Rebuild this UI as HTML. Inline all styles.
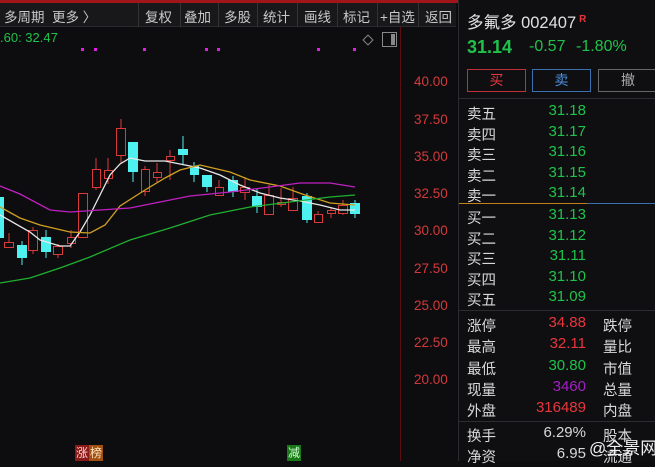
<!DOCTYPE html>
<html><head><meta charset="utf-8"><style>
*{margin:0;padding:0;box-sizing:border-box}
body{width:655px;height:461px;background:#0d0d10;overflow:hidden;position:relative;font-family:"Liberation Sans","Noto Sans CJK SC",sans-serif;color:#d0d0d0}
.a{position:absolute;white-space:nowrap}
.tb{position:absolute;left:0;top:3px;width:456px;height:24px;background:#18181b;border-bottom:1px solid #2a2a2e}
.tb span{position:absolute;top:3px;font-size:13.5px;color:#c8c8c8}
.sep{position:absolute;top:0;width:1px;height:24px;background:#333}
.rp{position:absolute;left:458px;top:0;width:197px;height:461px;background:#0f0f12;border-left:1px solid #2c2c30}
.l{position:absolute;left:8px;font-size:14.5px;color:#d8d8d8}
.v{position:absolute;right:69px;font-size:15px;text-align:right}
.l3{position:absolute;left:144px;font-size:14.5px;color:#d8d8d8}
.g{color:#1fc24a}.r{color:#e8363d}
</style></head><body>
<div class="a" style="left:0;top:0;width:655px;height:3px;background:#a0141a"></div>
<div class="tb">
<span style="left:4px">多周期&nbsp; 更多 〉</span>
<div class="sep" style="left:138px"></div><span style="left:145px">复权</span>
<div class="sep" style="left:180px"></div><span style="left:184px">叠加</span>
<div class="sep" style="left:218px"></div><span style="left:224px">多股</span>
<div class="sep" style="left:257px"></div><span style="left:263px">统计</span>
<div class="sep" style="left:297px"></div><span style="left:304px">画线</span>
<div class="sep" style="left:337px"></div><span style="left:343px">标记</span>
<div class="sep" style="left:377px"></div><span style="left:380px">+自选</span>
<div class="sep" style="left:418px"></div><span style="left:425px">返回</span>
</div>
<div class="a g" style="left:0;top:30px;font-size:13px">.60: 32.47</div>
<div class="a" style="left:400px;top:27px;width:1px;height:434px;background:#5a0d10"></div>
<div class="a" style="left:364px;top:36px;width:8px;height:8px;border:1px solid #888;transform:rotate(45deg)"></div>
<div class="a" style="left:382px;top:32px;width:15px;height:15px;border:1px solid #888"><div style="position:absolute;right:1px;top:1px;width:4px;height:11px;background:#888"></div></div>
<div class="a" style="left:414px;top:74px;font-size:13.5px;color:#d23a3a">40.00</div>
<div class="a" style="left:414px;top:112px;font-size:13.5px;color:#d23a3a">37.50</div>
<div class="a" style="left:414px;top:149px;font-size:13.5px;color:#d23a3a">35.00</div>
<div class="a" style="left:414px;top:186px;font-size:13.5px;color:#d23a3a">32.50</div>
<div class="a" style="left:414px;top:223px;font-size:13.5px;color:#d23a3a">30.00</div>
<div class="a" style="left:414px;top:261px;font-size:13.5px;color:#d23a3a">27.50</div>
<div class="a" style="left:414px;top:298px;font-size:13.5px;color:#d23a3a">25.00</div>
<div class="a" style="left:414px;top:335px;font-size:13.5px;color:#d23a3a">22.50</div>
<div class="a" style="left:414px;top:372px;font-size:13.5px;color:#d23a3a">20.00</div>
<svg class="a" style="left:0;top:0" width="400" height="461">
<g fill="#e020e0"><rect x="81" y="48" width="3" height="3"/><rect x="94" y="48" width="3" height="3"/><rect x="143" y="48" width="3" height="3"/><rect x="205" y="48" width="3" height="3"/><rect x="217" y="48" width="3" height="3"/><rect x="317" y="48" width="3" height="3"/><rect x="353" y="48" width="3" height="3"/></g>
<g stroke="#d93a3a" stroke-width="1" fill="none">
<path d="M9 233V248M22 241V265M33 227V254M58 244V258M71 230V248M83 193V237M96 158V190M108 158V184M121 119V163M145 166V196M157 163V182M170 150V180M219 180V195M245 177V200M269 185V214M281 188V207M293 187V210M318 211V223M331 207V218M343 200V215"/>
<rect x="4.5" y="242.5" width="9" height="5" fill="#0d0d10"/>
<rect x="28.5" y="230.5" width="9" height="20" fill="#0d0d10"/>
<rect x="53.5" y="246.5" width="9" height="8" fill="#0d0d10"/>
<rect x="67.5" y="237.5" width="8" height="6" fill="#0d0d10"/>
<rect x="78.5" y="193.5" width="9" height="44" fill="#0d0d10"/>
<rect x="92.5" y="169.5" width="8" height="18" fill="#0d0d10"/>
<rect x="104.5" y="170.5" width="8" height="8" fill="#0d0d10"/>
<rect x="116.5" y="128.5" width="9" height="27" fill="#0d0d10"/>
<rect x="141.5" y="169.5" width="8" height="22" fill="#0d0d10"/>
<rect x="153.5" y="172.5" width="8" height="5" fill="#0d0d10"/>
<rect x="166.5" y="156.5" width="8" height="4" fill="#0d0d10"/>
<rect x="215.5" y="187.5" width="8" height="8" fill="#0d0d10"/>
<rect x="240.5" y="187.5" width="9" height="5" fill="#0d0d10"/>
<rect x="264.5" y="195.5" width="9" height="19" fill="#0d0d10"/>
<rect x="277.5" y="202.5" width="8" height="2" fill="#0d0d10"/>
<rect x="288.5" y="198.5" width="9" height="12" fill="#0d0d10"/>
<rect x="314.5" y="214.5" width="8" height="8" fill="#0d0d10"/>
<rect x="327.5" y="210.5" width="8" height="3" fill="#0d0d10"/>
<rect x="338.5" y="205.5" width="9" height="8" fill="#0d0d10"/>
</g>
<g fill="#4ff0f0" stroke="#4ff0f0">
<path d="M22 241V265M46 230V258M133 142V182M183 136V165M194 162V182M207 178V192M233 176V197M257 188V213M307 193V223M355 200V218" stroke-width="1"/>
<rect x="0" y="197" width="4" height="41" stroke="none"/>
<rect x="17" y="245" width="10" height="13" stroke="none"/>
<rect x="41" y="237" width="10" height="15" stroke="none"/>
<rect x="128" y="142" width="10" height="30" stroke="none"/>
<rect x="178" y="149" width="10" height="6" stroke="none"/>
<rect x="190" y="166" width="9" height="9" stroke="none"/>
<rect x="202" y="175" width="10" height="12" stroke="none"/>
<rect x="228" y="180" width="10" height="12" stroke="none"/>
<rect x="252" y="196" width="10" height="11" stroke="none"/>
<rect x="302" y="196" width="10" height="24" stroke="none"/>
<rect x="350" y="203" width="10" height="11" stroke="none"/>
</g>
<g fill="none" stroke-width="1.3">
<polyline stroke="#e8e8e8" points="0,215 30,232 40,240 60,246 70,246 80,232 90,215 100,195 110,175 120,164 130,158 145,161 165,161 180,164 200,168 220,175 240,185 260,193 280,198 300,201 320,205 340,210 355,210"/>
<polyline stroke="#d0a020" points="0,207 20,218 40,225 70,232 90,233 105,225 120,206 145,190 165,178 180,170 200,165 230,172 250,180 280,186 305,195 330,203 355,205"/>
<polyline stroke="#c020c0" points="0,186 20,194 50,210 70,212 100,210 130,208 160,202 190,196 230,192 270,187 300,183 330,183 355,187"/>
<polyline stroke="#20b030" points="0,283 30,278 60,268 90,257 130,240 170,228 210,215 250,207 290,202 330,197 355,195"/>
</g>
</svg>
<div class="a" style="left:75px;top:445px;width:14px;height:16px;background:#8a1a1a;color:#ffd0d0;font-size:12px;line-height:16px;text-align:center">涨</div>
<div class="a" style="left:89px;top:445px;width:14px;height:16px;background:#a05010;color:#ffe0c0;font-size:12px;line-height:16px;text-align:center">榜</div>
<div class="a" style="left:287px;top:445px;width:14px;height:16px;background:#1a7a1a;color:#d0ffd0;font-size:12px;line-height:16px;text-align:center">减</div>

<div class="rp">
<div class="a" style="left:8px;top:9px;font-size:16.5px;color:#e0e0e0">多氟多 002407<sup style="color:#e8363d;font-size:10px;font-weight:bold;margin-left:3px">R</sup></div>
<div class="a g" style="left:8px;top:37px;font-size:18px;font-weight:bold">31.14</div>
<div class="a g" style="left:70px;top:38px;font-size:16px">-0.57</div>
<div class="a g" style="left:117px;top:38px;font-size:16px">-1.80%</div>
<div class="a" style="left:8px;top:69px;width:59px;height:23px;border:1px solid #c0303a;color:#e8363d;text-align:center;font-size:14px;line-height:21px">买</div>
<div class="a" style="left:73px;top:69px;width:59px;height:23px;border:1px solid #3a6fb0;color:#4a90e0;text-align:center;font-size:14px;line-height:21px">卖</div>
<div class="a" style="left:139px;top:69px;width:60px;height:23px;border:1px solid #666;color:#aaa;text-align:center;font-size:14px;line-height:21px">撤</div>
<div class="a" style="left:0;top:98px;width:197px;height:1px;background:#2c2c30"></div>
<div class="l" style="top:103px">卖五</div><div class="v g" style="top:102px">31.18</div>
<div class="l" style="top:124px">卖四</div><div class="v g" style="top:123px">31.17</div>
<div class="l" style="top:144px">卖三</div><div class="v g" style="top:143px">31.16</div>
<div class="l" style="top:165px">卖二</div><div class="v g" style="top:164px">31.15</div>
<div class="l" style="top:185px">卖一</div><div class="v g" style="top:184px">31.14</div>
<div class="a" style="left:0;top:203px;width:128px;height:1px;background:#c08020"></div>
<div class="a" style="left:128px;top:203px;width:69px;height:1px;background:#3a6fb0"></div>
<div class="l" style="top:207px">买一</div><div class="v g" style="top:206px">31.13</div>
<div class="l" style="top:228px">买二</div><div class="v g" style="top:227px">31.12</div>
<div class="l" style="top:248px">买三</div><div class="v g" style="top:247px">31.11</div>
<div class="l" style="top:269px">买四</div><div class="v g" style="top:268px">31.10</div>
<div class="l" style="top:289px">买五</div><div class="v g" style="top:288px">31.09</div>
<div class="a" style="left:0;top:310px;width:197px;height:1px;background:#2c2c30"></div>
<div class="l" style="top:315px">涨停</div><div class="v r" style="top:314px">34.88</div><div class="l3" style="top:315px">跌停</div>
<div class="l" style="top:336px">最高</div><div class="v r" style="top:335px">32.11</div><div class="l3" style="top:336px">量比</div>
<div class="l" style="top:358px">最低</div><div class="v g" style="top:357px">30.80</div><div class="l3" style="top:358px">市值</div>
<div class="l" style="top:379px">现量</div><div class="v" style="top:378px;color:#a020c0">3460</div><div class="l3" style="top:379px">总量</div>
<div class="l" style="top:400px">外盘</div><div class="v r" style="top:399px">316489</div><div class="l3" style="top:400px">内盘</div>
<div class="a" style="left:0;top:421px;width:197px;height:1px;background:#2c2c30"></div>
<div class="l" style="top:425px">换手</div><div class="v" style="top:424px;color:#d8d8d8">6.29%</div><div class="l3" style="top:425px">股本</div>
<div class="l" style="top:446px">净资</div><div class="v" style="top:445px;color:#d8d8d8">6.95</div><div class="l3" style="top:446px">流通</div>
<div class="a" style="left:130px;top:434px;font-size:17px;color:#f0f0f0">@全景网</div>
</div>
</body></html>
